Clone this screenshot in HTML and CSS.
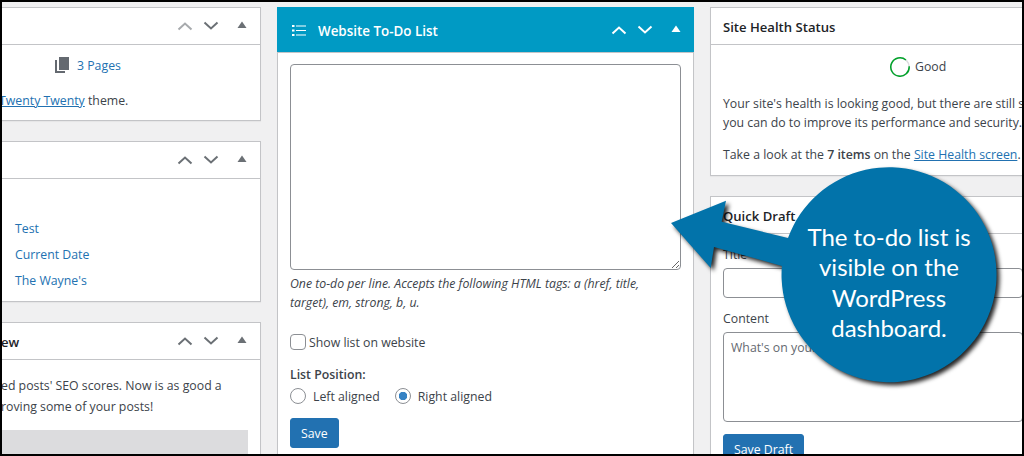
FILE: index.html
```html
<!DOCTYPE html>
<html lang="en">
<head>
<meta charset="utf-8">
<title>Website To-Do List</title>
<link rel="stylesheet" href="styles.css">
</head>
<body>
<svg class="defs" width="0" height="0" aria-hidden="true">
  <symbol id="up" viewBox="0 0 16 10"><path d="M1.5 8.5 8 2.500l6.500 6" fill="none" stroke="currentColor" stroke-width="2"/></symbol>
  <symbol id="down" viewBox="0 0 16 10"><path d="M1.500 1.500 8 7.500l6.500-6" fill="none" stroke="currentColor" stroke-width="2"/></symbol>
  <symbol id="tri" viewBox="0 0 10 8"><path d="M5 .5 9.500 7H.5z" fill="currentColor"/></symbol>
</svg>
<div class="frame">
  <div class="columns">
    <div class="col col-left">
      <section class="card">
        <header class="head">
          <div class="controls"><svg class="chev faded"><use href="#up"/></svg><svg class="chev"><use href="#down"/></svg><svg class="tri"><use href="#tri"/></svg></div>
        </header>
        <div class="glance">
          <div class="pages">
            <svg class="pages-icon" viewBox="0 0 14 16"><path d="M4 0h10v13H4z" fill="#646970"/><path d="M0 3h2v11h8v2H0z" fill="#646970"/></svg>
            <a class="link">3 Pages</a>
          </div>
          <p class="theme"><a class="link under">Twenty Twenty</a> theme.</p>
        </div>
      </section>
      <section class="card">
        <header class="head">
          <div class="controls"><svg class="chev"><use href="#up"/></svg><svg class="chev"><use href="#down"/></svg><svg class="tri"><use href="#tri"/></svg></div>
        </header>
        <ul class="recent">
          <li><a class="link">Test</a></li>
          <li><a class="link">Current Date</a></li>
          <li><a class="link">The Wayne's</a></li>
        </ul>
      </section>
      <section class="card">
        <header class="head">
          <h2 class="title clipped">ew</h2>
          <div class="controls"><svg class="chev"><use href="#up"/></svg><svg class="chev"><use href="#down"/></svg><svg class="tri"><use href="#tri"/></svg></div>
        </header>
        <div class="seo">
          <p>ed posts' SEO scores. Now is as good a<br>roving some of your posts!</p>
          <div class="seo-box"></div>
        </div>
      </section>
    </div>

    <div class="col">
      <section class="card">
        <header class="head head-blue">
          <svg class="list-icon" viewBox="0 0 14 12"><path d="M4 1.500h10M4 6h10M4 10.500h10" stroke="#fff" stroke-width="1.200" fill="none"/><path d="M0 .5h2.500v2H0zM0 5h2.500v2H0zM0 9.500h2.500v2H0z" fill="#fff"/></svg>
          <h2 class="title">Website To-Do List</h2>
          <div class="controls"><svg class="chev"><use href="#up"/></svg><svg class="chev"><use href="#down"/></svg><svg class="tri"><use href="#tri"/></svg></div>
        </header>
        <div class="todo">
          <textarea class="todo-area"></textarea>
          <p class="hint">One to-do per line. Accepts the following HTML tags: a (href, title, target), em, strong, b, u.</p>
          <label class="check"><input type="checkbox" class="box"> Show list on website</label>
          <p class="pos-label">List Position:</p>
          <div class="radios">
            <label class="radio"><input type="radio" name="pos" class="round">Left aligned</label>
            <label class="radio"><input type="radio" name="pos" class="round" checked>Right aligned</label>
          </div>
          <button class="btn">Save</button>
        </div>
      </section>
    </div>

    <div class="col col-right">
      <section class="card">
        <header class="head"><h2 class="title">Site Health Status</h2></header>
        <div class="health">
          <div class="status">
            <svg class="ring" viewBox="0 0 20 20"><circle cx="10" cy="10" r="9.200" fill="none" stroke="#dcdcde" stroke-width="1.500"/><path d="M16.500 3.500A9.200 9.200 0 1 1 10 .8" transform="rotate(40 10 10)" fill="none" stroke="#00a32a" stroke-width="1.500"/></svg>
            Good
          </div>
          <p class="nowrap">Your site's health is looking good, but there are still some things<br>you can do to improve its performance and security.</p>
          <p class="nowrap take">Take a look at the <strong class="strong">7 items</strong> on the <a class="link under">Site Health screen</a>.</p>
        </div>
      </section>
      <section class="card">
        <header class="head"><h2 class="title">Quick Draft</h2></header>
        <form class="draft">
          <label class="field-label">Title</label>
          <input class="text-input" type="text">
          <label class="field-label content-label">Content</label>
          <textarea class="draft-area" placeholder="What's on your mind?"></textarea>
          <button class="btn" type="button">Save Draft</button>
        </form>
      </section>
    </div>
  </div>

  <div class="callout">
    <svg class="callout-shape" viewBox="0 0 360 230" width="360" height="230">
      <path d="M0 57 55 34.700 50.700 55.700 117 72A107.500 107.500 0 1 1 110.900 99.900L43 81 39.700 102z" fill="#0273aa"/>
    </svg>
    <p class="callout-text">The to-do list is<br>visible on the<br>WordPress<br>dashboard.</p>
  </div>
</div>
</body>
</html>
```
FILE: styles.css
```css
* { box-sizing: border-box; }
html, body { margin: 0; padding: 0; }
body { width: 1024px; height: 456px; overflow: hidden; font-family: "Open Sans", "Liberation Sans", sans-serif; font-size: 12.3px; color: #3c434a; }
p { margin: 0; }
.defs { position: absolute; }

.frame { position: relative; width: 1024px; height: 456px; border: 2px solid #000; background: #f0f0f1; overflow: hidden; padding-top: 5px; }
.columns { display: grid; grid-template-columns: 259px 417px 320px; column-gap: 16px; align-items: start; }
.col { display: flex; flex-direction: column; gap: 20px; min-width: 0; }
.col-left .card { margin-left: -2px; }

.card { background: #fff; border: 1px solid #c3c4c7; box-shadow: 0 1px 1px rgba(0,0,0,.04); }
.head { display: flex; align-items: center; height: 37px; padding-left: 12px; border-bottom: 1px solid #c3c4c7; }
.col-left .head { padding-left: 0; }
.title { margin: 2px 0 0; font-size: 13.100px; font-weight: 600; color: #1d2327; }
.controls { display: flex; align-items: center; margin-left: auto; padding-right: 13px; color: #6b7075; }
.chev { width: 16px; height: 10px; margin-right: 10px; }
.chev.faded { color: #a7aaad; }
.tri { width: 10px; height: 8px; margin-left: 8.500px; margin-top: -2px; }

.head-blue { height: 46px; background: #009ac4; color: #fff; padding-left: 15px; margin: -1px -1px 0; width: calc(100% + 2px); }
.head-blue .title { color: #fff; font-size: 13.400px; margin-left: 12px; }
.head-blue .controls { color: #fff; padding-right: 13px; }
.list-icon { width: 14px; height: 13px; margin-top: 1px; }

.link { color: #2271b1; text-decoration: none; }
.under { text-decoration: underline; }

.glance { height: 75px; padding-top: 10px; }
.pages { display: flex; align-items: center; height: 20px; padding-left: 54px; gap: 8px; }
.pages-icon { width: 14px; height: 16px; }
.theme { margin-top: 16px; line-height: 20px; margin-left: -2px; }

.recent { list-style: none; margin: 0; padding: 37px 0 7px 14px; }
.recent li { height: 26px; line-height: 26px; }

.seo { padding-top: 15px; }
.seo p { line-height: 21px; }
.seo-box { width: 247px; height: 40px; margin-top: 13px; background: #dcdcde; }

.todo { padding: 11px 12px 0; height: 402px; }
.todo-area { display: block; width: 391px; height: 206px; border: 1px solid #8c8f94; border-radius: 4px; background: #fff; }
.hint { margin-top: 4px; font-style: italic; line-height: 19px; width: 391px; }
.check { display: flex; align-items: center; margin-top: 22px; height: 16px; gap: 3px; }
.box { appearance: none; width: 16px; height: 16px; margin: 0; border: 1px solid #8c8f94; border-radius: 4px; background: #fff; }
.pos-label { margin-top: 16px; line-height: 18px; font-weight: 600; }
.radios { display: flex; margin-top: 4px; gap: 15px; }
.radio { display: flex; align-items: center; gap: 7px; height: 16px; }
.round { appearance: none; width: 16px; height: 16px; margin: 0; border: 1px solid #8c8f94; border-radius: 50%; background: #fff; }
.round:checked { background: radial-gradient(circle, #3582c4 0 4px, #fff 4.500px); }
.btn { display: block; flex: none; margin-top: 14px; height: 30px; padding: 0 10px; border: 1px solid #2271b1; border-radius: 3px; background: #2271b1; color: #fff; font: inherit; }

.col-right .card { width: 320px; }
.health { height: 130px; padding: 11px 12px 0; }
.status { display: flex; align-items: center; height: 21px; padding-left: 167px; gap: 5px; font-weight: 500; }
.ring { width: 20px; height: 20px; }
.nowrap { white-space: nowrap; line-height: 19px; margin-top: 17px; }
.take { margin-top: 13px; }
.strong { font-weight: 600; }

.draft { padding: 12px 12px 0; height: 240px; display: flex; flex-direction: column; align-items: flex-start; }
.field-label { flex: none; line-height: 18px; }
.text-input { flex: none; width: 300px; height: 30px; margin-top: 4px; border: 1px solid #8c8f94; border-radius: 4px; background: #fff; }
.content-label { margin-top: 12px; }
.draft-area { flex: none; width: 300px; height: 90px; margin-top: 4px; padding: 6px 7px; border: 1px solid #8c8f94; border-radius: 4px; font: inherit; resize: none; }
.draft-area::placeholder { color: #646970; opacity: 1; }
.draft .btn { margin-top: 12px; }

.callout { position: absolute; left: 669px; top: 164px; width: 360px; height: 230px; }
.callout-shape { display: block; filter: drop-shadow(3px 3px 2px rgba(0,0,0,.85)); overflow: visible; }
.callout-text { position: absolute; left: 110px; top: 56px; width: 216px; text-align: center; font-family: "Lato", "Open Sans", sans-serif; font-size: 24px; line-height: 30.400px; color: #fff; }
```
